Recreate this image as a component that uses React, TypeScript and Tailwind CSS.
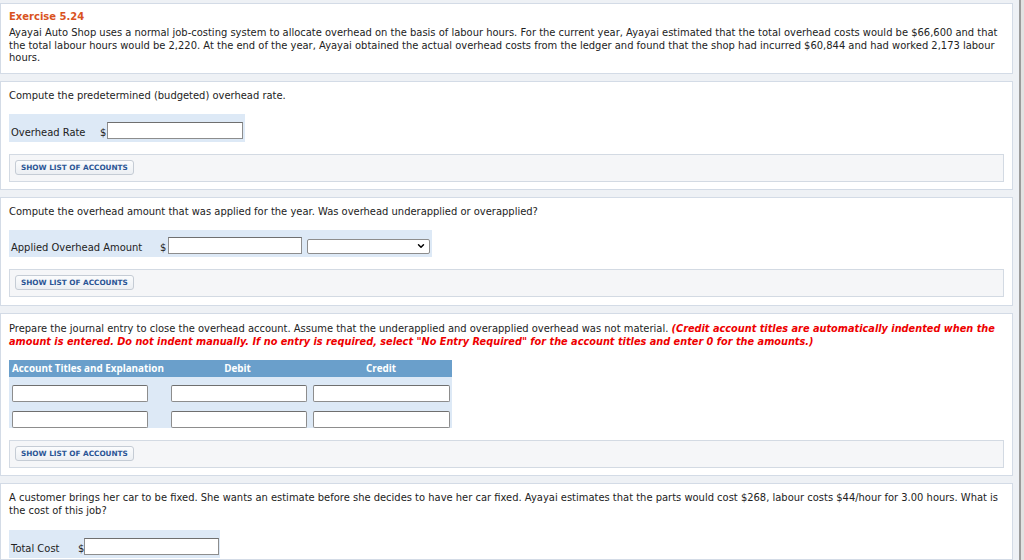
import { ChevronDown } from 'lucide-react'

const font = { fontFamily: '"DejaVu Sans", Verdana, sans-serif' }

function Field({ className = '' }: { className?: string }) {
    return <div className={`h-[17px] bg-white border border-[#8d8d8d] border-t-[#6f6f6f] ${className}`} />
}

function AccountsBox() {
    return (
        <div className="h-[28px] mt-[12px] bg-[#f5f6f8] border border-[#d3dae3] flex items-center pl-[5px]">
            <button className="h-[15px] px-[5px] rounded-[3px] border border-[#c5ccd5] bg-gradient-to-b from-[#fbfcfd] to-[#eceff3] text-[7.3px] font-bold text-[#2b5595] leading-none">
                SHOW LIST OF ACCOUNTS
            </button>
        </div>
    )
}

function Panel({ children, className = '' }: { children: React.ReactNode; className?: string }) {
    return <div className={`bg-white border border-[#d3dbe6] px-[8px] ${className}`}>{children}</div>
}

export default function App() {
    return (
        <div className="flex h-[560px] overflow-hidden text-[9.95px] text-[#222] bg-[#eef1f5]" style={font}>
            <div className="w-[1013px] pt-[3px] flex flex-col gap-[7px]">
                {/* Exercise */}
                <Panel className="pt-[7px] pb-[8px]">
                    <div className="font-bold text-[#d9531e] text-[10px] leading-[12px]">Exercise 5.24</div>
                    <p className="mt-[4px] leading-[12.5px] whitespace-nowrap">
                        Ayayai Auto Shop uses a normal job-costing system to allocate overhead on the basis of labour hours. For the current year, Ayayai estimated that the total overhead costs would be $66,600 and that<br />
                        the total labour hours would be 2,220. At the end of the year, Ayayai obtained the actual overhead costs from the ledger and found that the shop had incurred $60,844 and had worked 2,173 labour<br />
                        hours.
                    </p>
                </Panel>

                {/* Overhead rate */}
                <Panel className="pt-[8px] pb-[7px]">
                    <p className="leading-[12px]">Compute the predetermined (budgeted) overhead rate.</p>
                    <div className="mt-[12px] w-[236px] h-[28px] bg-[#dde9f6] flex items-end pb-[3px] pl-[2px]">
                        <span className="w-[89px] leading-[12px] whitespace-nowrap">Overhead Rate</span>
                        <span className="w-[7px] leading-[12px]">$</span>
                        <Field className="w-[136px]" />
                    </div>
                    <AccountsBox />
                </Panel>

                {/* Applied overhead */}
                <Panel className="pt-[8px] pb-[8px]">
                    <p className="leading-[12px]">Compute the overhead amount that was applied for the year. Was overhead underapplied or overapplied?</p>
                    <div className="mt-[12px] w-[423px] h-[27px] bg-[#dde9f6] flex items-end pb-[3px] pl-[2px]">
                        <span className="w-[149px] leading-[12px] whitespace-nowrap">Applied Overhead Amount</span>
                        <span className="w-[8px] leading-[12px]">$</span>
                        <Field className="w-[134px]" />
                        <div className="ml-[5px] w-[123px] h-[15px] bg-white border border-[#8d8d8d] rounded-[2px] flex items-center justify-end pr-[3px]">
                            <ChevronDown className="w-[10px] h-[10px] text-black" strokeWidth={3.5} />
                        </div>
                    </div>
                    <AccountsBox />
                </Panel>

                {/* Journal entry */}
                <Panel className="pt-[8px] pb-[7px]">
                    <p className="leading-[13px] whitespace-nowrap">
                        Prepare the journal entry to close the overhead account. Assume that the underapplied and overapplied overhead was not material.{' '}
                        <span className="font-bold italic text-[#ee0000] text-[9.75px]">
                            (Credit account titles are automatically indented when the<br />
                            amount is entered. Do not indent manually. If no entry is required, select "No Entry Required" for the account titles and enter 0 for the amounts.)
                        </span>
                    </p>
                    <div className="mt-[12px] w-[443px]">
                        <div className="h-[17px] bg-[#6a9fcb] flex items-center text-white font-bold text-[9.85px]" style={{ fontFamily: '"Open Sans", sans-serif' }}>
                            <span className="w-[156px] pl-[3px] whitespace-nowrap">Account Titles and Explanation</span>
                            <span className="w-[145px] text-center">Debit</span>
                            <span className="w-[142px] text-center">Credit</span>
                        </div>
                        <div className="bg-[#dde9f6] pt-[8px] flex flex-col gap-[9px]">
                            {[0, 1].map((row) => (
                                <div key={row} className="flex pl-[3px]">
                                    <Field className="w-[136px] rounded-[2px]" />
                                    <Field className="ml-[23px] w-[136px] rounded-[2px]" />
                                    <Field className="ml-[6px] w-[137px] rounded-[2px]" />
                                </div>
                            ))}
                        </div>
                    </div>
                    <div className="mt-[2px]">
                        <AccountsBox />
                    </div>
                </Panel>

                {/* Job cost */}
                <Panel className="pt-[7px] flex-1">
                    <p className="leading-[13.5px] whitespace-nowrap">
                        A customer brings her car to be fixed. She wants an estimate before she decides to have her car fixed. Ayayai estimates that the parts would cost $268, labour costs $44/hour for 3.00 hours. What is<br />
                        the cost of this job?
                    </p>
                    <div className="mt-[12px] w-[211px] h-[28px] bg-[#dde9f6] flex items-end pb-[3px] pl-[2px]">
                        <span className="w-[67px] leading-[12px] whitespace-nowrap">Total Cost</span>
                        <span className="w-[6px] leading-[12px]">$</span>
                        <Field className="w-[135px]" />
                    </div>
                </Panel>
            </div>
            <div className="w-[6px]" />
            <div className="w-[2px] bg-[#9b9b9b]" />
            <div className="flex-1 bg-[#e2e2e2]" />
        </div>
    )
}
